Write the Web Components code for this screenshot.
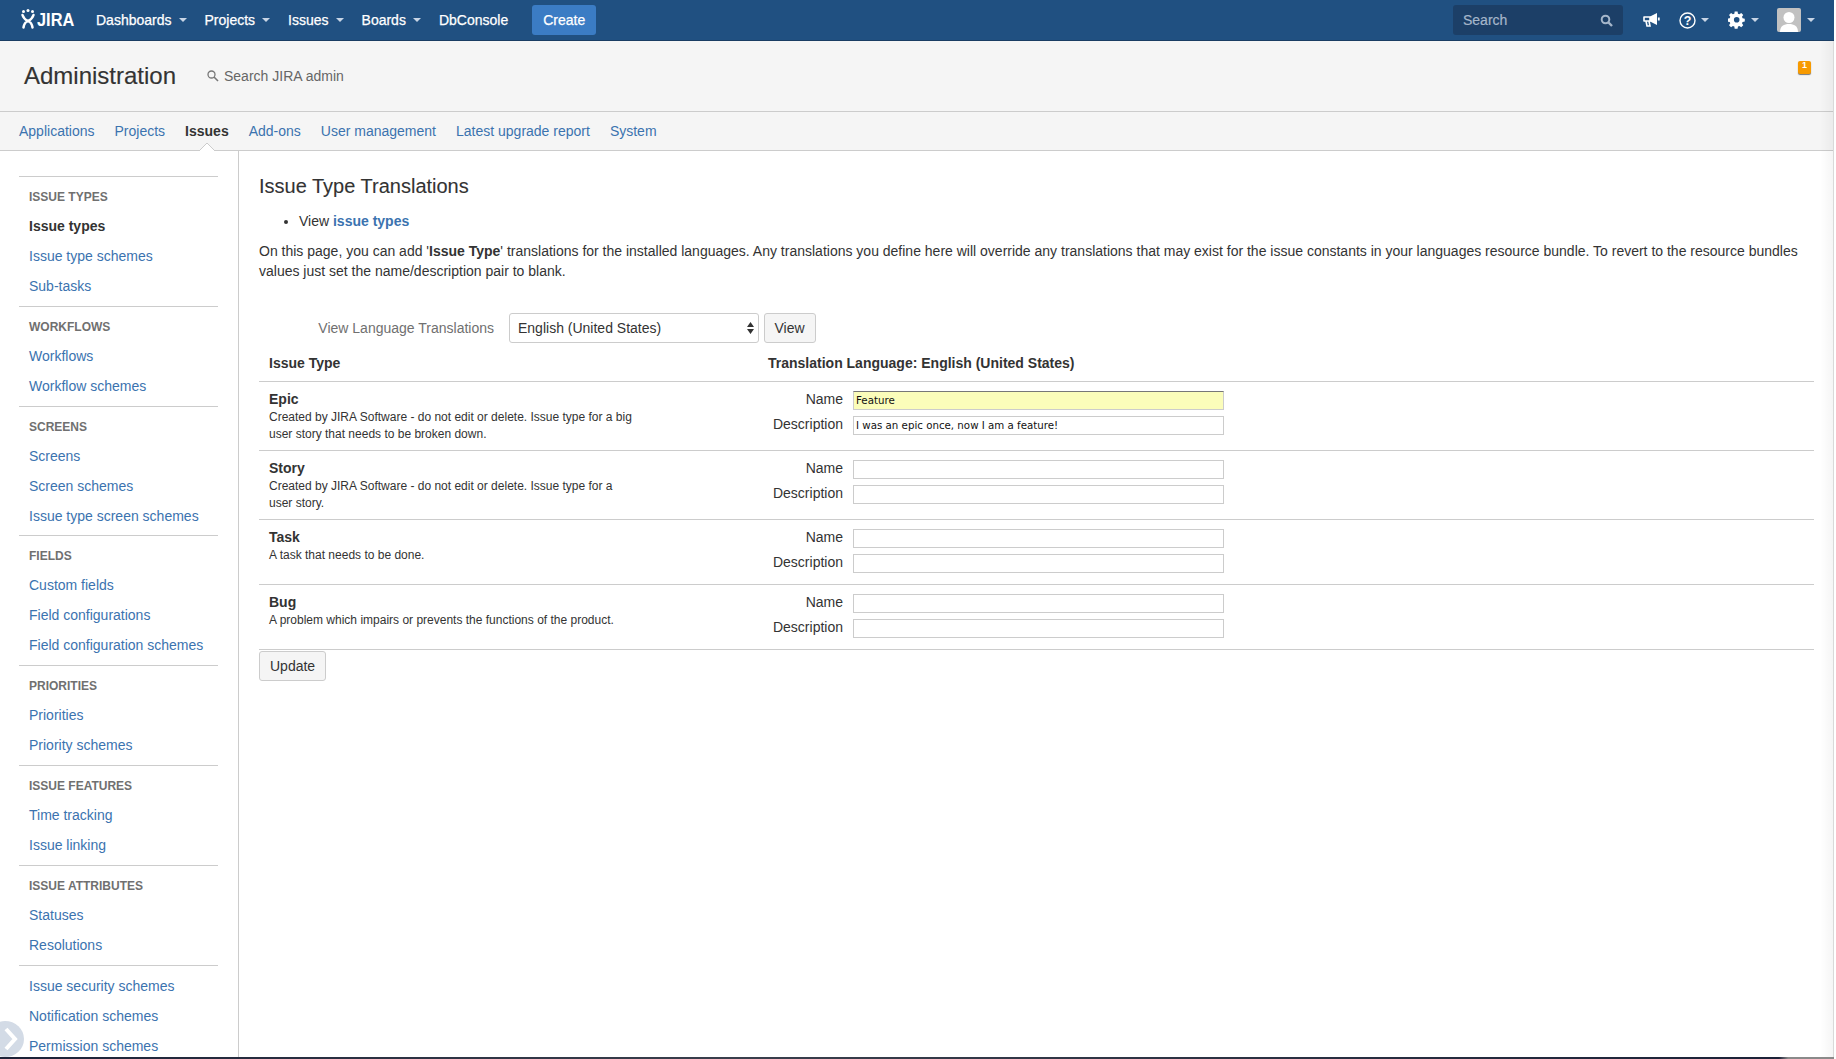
<!DOCTYPE html>
<html lang="en"><head><meta charset="utf-8"><title>Issue Type Translations</title>
<style>
html,body{margin:0;padding:0;height:1059px;overflow:hidden;background:#fff}
body{font:14px/20px "Liberation Sans",Arial,sans-serif;color:#333}
jira-app{width:1836px;height:1059px}
</style></head><body>
<jira-app>
  <jira-header></jira-header>
  <admin-bar></admin-bar>
  <admin-tabs></admin-tabs>
  <div style="display:flex;flex:1;min-height:0">
    <admin-sidebar></admin-sidebar>
    <translation-panel></translation-panel>
  </div>
</jira-app>
<script>
const def=(n,html)=>customElements.define(n,class extends HTMLElement{
  connectedCallback(){ if(!this.shadowRoot){const r=this.attachShadow({mode:'open'});r.innerHTML=typeof html==='function'?html(this):html;} }
});
const caret=(c='#c8d5e6')=>`<svg width="8" height="4" viewBox="0 0 8 4" style="display:block"><path d="M0 0h8L4 4z" fill="${c}"/></svg>`;

def('jira-app',`<style>:host{display:flex;flex-direction:column;position:relative;overflow:hidden;border-right:2px solid #fff;box-sizing:border-box}
.edge{position:absolute;left:0;right:0;bottom:0;height:2px;background:linear-gradient(90deg,#1c2238 0,#3a3f4c 40%,#1c2238 97%,#8a8a8a 97.500%,#8a8a8a 100%)}
.rail{position:absolute;right:0;top:41px;bottom:0;width:14px;background:linear-gradient(90deg,rgba(0,0,0,0),rgba(0,0,0,.04));border-right:1px solid #d9d9d9;box-sizing:border-box}
.flyout{position:absolute;left:-14px;bottom:2px;width:38px;height:36px;border-radius:50%;background:#d3dbe6;overflow:hidden}
.flyout svg{position:absolute;left:18px;top:6px}</style>
<slot></slot><div class="rail"></div>
<div class="flyout"><svg width="14" height="24" viewBox="0 0 14 24"><path d="M2 2l9 10-9 10" fill="none" stroke="#fff" stroke-width="4"/></svg></div>
<div class="edge"></div>`);

def('nav-link',t=>`<style>:host{display:flex;align-items:center;gap:7px;color:#fff;height:40px;white-space:nowrap;-webkit-text-stroke:.25px #fff}</style><slot></slot>${t.hasAttribute('menu')?caret():''}`);

def('jira-header',`<style>
:host{display:flex;align-items:center;height:40px;background:#205081;border-bottom:1px solid #1a3d63;padding:0 0 0 21px;flex:none;color:#fff}
.logo{display:flex;align-items:center;gap:2px;width:75px;font:700 19px/40px "Liberation Sans",Arial,sans-serif}
.logo span{display:inline-block;transform:scaleX(.86);transform-origin:left center}
.logo svg{display:block;margin-top:-2px}
nav{display:flex;gap:18px}
.create{margin-left:24px;width:64px;height:30px;background:#3b7cc4;border-radius:3px;display:flex;align-items:center;justify-content:center;-webkit-text-stroke:.25px #fff}
.sp{flex:1}
.search{width:170px;height:30px;border-radius:3px;background:#1c3f67;color:#a5b6ca;display:flex;align-items:center;justify-content:space-between;padding:0 10px;box-sizing:border-box;-webkit-text-stroke:.2px #a5b6ca}
.tools{display:flex;align-items:center;margin-left:20px;margin-right:19px}
.tools i{display:block;margin-left:5px}
.g{display:flex;align-items:center}
</style>
<div class="logo"><svg width="14" height="20" viewBox="0 0 14 20"><g fill="#fff"><circle cx="2.500" cy="2.500" r="1.500"/><circle cx="7" cy="1.600" r="1.500"/><circle cx="11.500" cy="2.500" r="1.500"/></g><path d="M1.500 6c1 3.500 2.500 4.500 5.500 6.500 3-2 4.500-3 5.500-6.500M2.500 18.500c.5-3.500 1.800-5.500 4.500-7 2.700 1.500 4 3.500 4.500 7" fill="none" stroke="#fff" stroke-width="2.500" stroke-linecap="round"/></svg><span>JIRA</span></div>
<nav>
<nav-link menu>Dashboards</nav-link><nav-link menu>Projects</nav-link><nav-link menu>Issues</nav-link><nav-link menu>Boards</nav-link><nav-link>DbConsole</nav-link></nav>
<div class="create">Create</div>
<div class="sp"></div>
<div class="search"><span>Search</span><svg width="13" height="13" viewBox="0 0 13 13"><circle cx="5.500" cy="5.500" r="3.800" fill="none" stroke="#a5b6ca" stroke-width="2"/><path d="M8.500 8.500l3.500 3.500" stroke="#a5b6ca" stroke-width="2.400"/></svg></div>
<div class="tools">
 <svg width="17" height="16" viewBox="0 0 17 16" style="margin-right:19px"><path d="M1 5h6v4H1z" fill="none" stroke="#fff" stroke-width="1.600" stroke-linejoin="round"/><path d="M3 9l1 5h3l-1-5" fill="none" stroke="#fff" stroke-width="1.600"/><path d="M7 4.500l7-3.500v12L7 9.500z" fill="#fff"/><path d="M15.800 5.500v3" stroke="#fff" stroke-width="1.800"/></svg>
 <div class="g" style="margin-right:19px"><svg width="17" height="17" viewBox="0 0 17 17"><circle cx="8.500" cy="8.500" r="7.500" fill="none" stroke="#fff" stroke-width="1.400"/><text x="8.500" y="13" text-anchor="middle" font-family="Liberation Sans" font-size="12.500" font-weight="700" fill="#fff">?</text></svg><i>${caret()}</i></div>
 <div class="g" style="margin-right:18px"><svg width="18" height="18" viewBox="0 0 18 18"><path d="M7.500 1h3l.4 2.300 1.500.6 1.900-1.300 2.100 2.100-1.300 1.900.6 1.500 2.300.4v3l-2.300.4-.6 1.500 1.300 1.900-2.100 2.100-1.900-1.300-1.500.6-.4 2.300h-3l-.4-2.300-1.500-.6-1.900 1.300-2.100-2.100 1.300-1.900-.6-1.500-2.300-.4v-3l2.300-.4.6-1.500-1.300-1.900 2.100-2.100 1.900 1.300 1.500-.6z" fill="#fff" transform="translate(-.5 -.5) scale(.96)"/><circle cx="8.700" cy="8.700" r="2.800" fill="#205081"/></svg><i>${caret()}</i></div>
 <div class="g"><svg width="24" height="24" viewBox="0 0 24 24" style="border-radius:2px;display:block"><rect width="24" height="24" fill="#c1c1c1"/><circle cx="12" cy="9.500" r="5.500" fill="#fff"/><path d="M3 24c0-6 4-8 9-8s9 2 9 8z" fill="#fff"/></svg><i style="margin-left:6px">${caret()}</i></div>
</div>`);

def('admin-bar',`<style>:host{display:flex;align-items:center;height:70px;padding:0 0 0 24px;background:#f5f5f5;border-bottom:1px solid #ccc;flex:none;position:relative}
h1{font:400 24px/30px "Liberation Sans",Arial,sans-serif;margin:0;color:#333;width:183px;-webkit-text-stroke:.15px #333}
.s{display:flex;align-items:center;gap:5px;color:#666}
.b{position:absolute;left:1798px;top:20px;width:13px;height:13px;border-radius:2px;background:#f79a00;box-shadow:0 1px 1px #777;color:#fff;font:700 9px/9px "Liberation Sans",Arial,sans-serif;text-align:center}
</style><h1>Administration</h1>
<div class="s"><svg width="12" height="12" viewBox="0 0 12 12"><circle cx="4.500" cy="4.500" r="3.500" fill="none" stroke="#777" stroke-width="1.300"/><path d="M7 7l4 4" stroke="#777" stroke-width="1.600"/></svg><span>Search JIRA admin</span></div>
<div class="b">1</div>`);

def('admin-tabs',`<style>:host{display:flex;align-items:center;gap:20px;height:38px;background:#f5f5f5;border-bottom:1px solid #ccc;padding-left:19px;flex:none;color:#3b73af;position:relative}
b{color:#333;position:relative}
.t{position:absolute;left:199px;bottom:-1px;display:block}
</style>
<span>Applications</span><span>Projects</span><b>Issues</b><span>Add-ons</span><span>User management</span><span>Latest upgrade report</span><span>System</span>
<svg class="t" width="16" height="8" viewBox="0 0 16 8"><path d="M0 8L8 0l8 8" fill="#fff" stroke="#ccc"/></svg>`);

def('side-group',t=>`<style>:host{display:block;border-top:1px solid #ccc;padding:0 0 4.800px}
h5{margin:0;font:700 12px/20px "Liberation Sans",Arial,sans-serif;color:#707070;padding:10px 10px 4px 10px;text-transform:uppercase}
:host([plain]){padding-top:5px}
</style>${t.getAttribute('title')?`<h5>${t.getAttribute('title')}</h5>`:''}<slot></slot>`);
def('side-item',`<style>:host{display:block;height:30px;line-height:30px;padding-left:10px;color:#3b73af;white-space:nowrap}
:host([current]){color:#333;font-weight:700}</style><slot></slot>`);

def('admin-sidebar',`<style>:host{display:block;width:239px;flex:none;box-sizing:border-box;padding:25px 20px 0 19px;border-right:1px solid #ccc;overflow:hidden}</style>
<side-group title="Issue types"><side-item current>Issue types</side-item><side-item>Issue type schemes</side-item><side-item>Sub-tasks</side-item></side-group>
<side-group title="Workflows"><side-item>Workflows</side-item><side-item>Workflow schemes</side-item></side-group>
<side-group title="Screens"><side-item>Screens</side-item><side-item>Screen schemes</side-item><side-item>Issue type screen schemes</side-item></side-group>
<side-group title="Fields"><side-item>Custom fields</side-item><side-item>Field configurations</side-item><side-item>Field configuration schemes</side-item></side-group>
<side-group title="Priorities"><side-item>Priorities</side-item><side-item>Priority schemes</side-item></side-group>
<side-group title="Issue features"><side-item>Time tracking</side-item><side-item>Issue linking</side-item></side-group>
<side-group title="Issue attributes"><side-item>Statuses</side-item><side-item>Resolutions</side-item></side-group>
<side-group plain><side-item>Issue security schemes</side-item><side-item>Notification schemes</side-item><side-item>Permission schemes</side-item></side-group>`);

def('aui-button',`<style>:host{display:inline-flex;align-items:center;justify-content:center;height:30px;box-sizing:border-box;padding:0 10px;background:#f5f5f5;border:1px solid #ccc;border-radius:3.010px;color:#333}</style><slot></slot>`);

def('field-row',t=>`<style>:host{display:flex;align-items:center;height:19px}
label{width:584px;text-align:right;padding:0 10px 3px 0;box-sizing:border-box}
.i{width:371px;height:19px;box-sizing:border-box;border:1px solid #ccc;background:#fff;color:#111;font:10.250px/17px "DejaVu Sans",sans-serif;padding-left:2px;white-space:nowrap;overflow:hidden}
:host([auto]) .i{background:#fbfdba;border-top-color:#777}
</style><label>${t.getAttribute('label')}</label><div class="i">${t.getAttribute('value')||''}</div>`);

def('type-row',t=>`<style>:host{display:flex;border-bottom:1px solid #ccc;padding-left:10px}
.l{width:367px;padding:7px 0 7px;font-size:12px;line-height:17px}
b{display:block;font-size:14px;line-height:20px;color:#333}
.r{padding:8.500px 0 11.500px;display:flex;flex-direction:column;gap:6px;margin-left:-377px;flex:none}
.w{width:377px;flex:none}
</style><div class="w"><div class="l"><b>${t.getAttribute('name')}</b>${t.getAttribute('desc')}</div></div>
<div class="r"><field-row label="Name" value="${t.getAttribute('v1')||''}" ${t.hasAttribute('v1')?'auto':''}></field-row><field-row label="Description" value="${t.getAttribute('v2')||''}"></field-row></div>`);

def('translation-panel',`<style>:host{display:block;flex:1;min-width:0;padding:20px 20px 0 20px}
h2{font:400 20px/30px "Liberation Sans",Arial,sans-serif;color:#333;margin:0 0 10px;-webkit-text-stroke:.1px #333}
ul{margin:0;padding:0 0 0 40px;line-height:20px}
a{color:#3b73af;font-weight:700}
p{margin:10px 0 0;line-height:20px}
.sel{display:flex;align-items:center;margin-top:32px;height:30px;gap:5px}
.lab{width:245px;text-align:right;padding-right:10px;box-sizing:border-box;color:#707070;margin-right:0}
.box{width:249.500px;height:30px;box-sizing:border-box;border:1px solid #ccc;border-radius:3px;background:#fff;display:flex;align-items:center;justify-content:space-between;padding:0 4px 0 8px}
.hd{display:flex;font-weight:700;height:39px;padding:2.500px 0 0 10px;align-items:center;border-bottom:1px solid #ccc;box-sizing:border-box}
.hd span:first-child{width:499px}
.act{margin-top:1px}
</style>
<h2>Issue Type Translations</h2>
<ul><li>View <a>issue types</a></li></ul>
<p>On this page, you can add '<b>Issue Type</b>' translations for the installed languages. Any translations you define here will override any translations that may exist for the issue constants in your languages resource bundle. To revert to the resource bundles values just set the name/description pair to blank.</p>
<div class="sel"><div class="lab">View Language Translations</div><div class="box"><span>English (United States)</span><svg width="7" height="12" viewBox="0 0 7 12"><path d="M3.500 0L7 5H0zM3.500 12L0 7h7z" fill="#333"/></svg></div><aui-button>View</aui-button></div>
<div class="hd"><span>Issue Type</span><span>Translation Language: English (United States)</span></div>
<type-row name="Epic" desc="Created by JIRA Software - do not edit or delete. Issue type for a big user story that needs to be broken down." v1="Feature" v2="I was an epic once, now I am a feature!"></type-row>
<type-row name="Story" desc="Created by JIRA Software - do not edit or delete. Issue type for a user story."></type-row>
<type-row name="Task" desc="A task that needs to be done."></type-row>
<type-row name="Bug" desc="A problem which impairs or prevents the functions of the product."></type-row>
<div class="act"><aui-button>Update</aui-button></div>`);
</script>
</body></html>
